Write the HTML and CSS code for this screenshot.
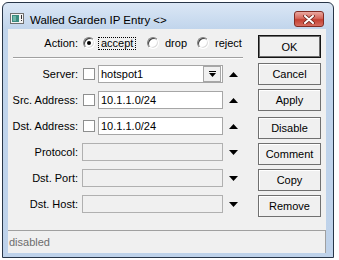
FILE: index.html
```html
<!DOCTYPE html>
<html lang="en">
  <head>
    <meta charset="UTF-8" />
    <title>Walled Garden IP Entry</title>
    <link rel="stylesheet" href="styles.css">
  </head>
  <body>
    <div class="window">
      <div class="titlebar">
        <svg class="app-icon" width="14" height="11" viewBox="0 0 14 11">
          <rect x="0.5" y="0.5" width="13" height="10" fill="#f4f4f4" stroke="#6f6f6f" />
          <rect x="2" y="2" width="7" height="7" fill="#3b8c80" />
          <rect x="3" y="3" width="3" height="5" fill="#6fb5a8" />
          <rect x="11" y="2" width="1" height="4" fill="#333" />
          <rect x="11" y="7" width="1" height="1" fill="#333" />
        </svg>
        <span class="title">Walled Garden IP Entry &lt;&gt;</span>
        <div class="close">
          <svg width="12" height="9" viewBox="0 0 12 9">
            <path d="M2 1 L10 8 M10 1 L2 8" stroke="#6b231c" stroke-width="3.6" stroke-linecap="round" />
            <path d="M2 1 L10 8 M10 1 L2 8" stroke="#fff" stroke-width="2" stroke-linecap="round" />
          </svg>
        </div>
      </div>

      <div class="client">
        <div class="body">
          <div class="form">
            <div class="row action">
              <span class="label">Action:</span>
              <div class="option first">
                <span class="radio checked"></span>
                <span class="opt-text focus">accept</span>
              </div>
              <div class="option second">
                <span class="radio"></span>
                <span class="opt-text">drop</span>
              </div>
              <div class="option">
                <span class="radio"></span>
                <span class="opt-text">reject</span>
              </div>
            </div>

            <div class="sep"></div>

            <div class="rows">
              <div class="row">
                <span class="label">Server:</span>
                <span class="check"></span>
                <div class="field">
                  <span class="value">hotspot1</span>
                  <span class="drop-btn">
                    <svg width="7" height="7" viewBox="0 0 7 7">
                      <rect x="0" y="0" width="7" height="1" fill="#000" />
                      <polygon points="0,2 7,2 3.5,6" fill="#000" />
                    </svg>
                  </span>
                </div>
                <svg class="arrow" width="9" height="5" viewBox="0 0 9 5"><polygon points="0,5 9,5 4.5,0" fill="#000" /></svg>
              </div>
              <div class="row">
                <span class="label">Src. Address:</span>
                <span class="check"></span>
                <div class="field"><span class="value">10.1.1.0/24</span></div>
                <svg class="arrow" width="9" height="5" viewBox="0 0 9 5"><polygon points="0,5 9,5 4.5,0" fill="#000" /></svg>
              </div>
              <div class="row">
                <span class="label">Dst. Address:</span>
                <span class="check"></span>
                <div class="field"><span class="value">10.1.1.0/24</span></div>
                <svg class="arrow" width="9" height="5" viewBox="0 0 9 5"><polygon points="0,5 9,5 4.5,0" fill="#000" /></svg>
              </div>
              <div class="row">
                <span class="label">Protocol:</span>
                <div class="field wide disabled"></div>
                <svg class="arrow" width="9" height="5" viewBox="0 0 9 5"><polygon points="0,0 9,0 4.5,5" fill="#000" /></svg>
              </div>
              <div class="row">
                <span class="label">Dst. Port:</span>
                <div class="field wide disabled"></div>
                <svg class="arrow" width="9" height="5" viewBox="0 0 9 5"><polygon points="0,0 9,0 4.5,5" fill="#000" /></svg>
              </div>
              <div class="row">
                <span class="label">Dst. Host:</span>
                <div class="field wide disabled"></div>
                <svg class="arrow" width="9" height="5" viewBox="0 0 9 5"><polygon points="0,0 9,0 4.5,5" fill="#000" /></svg>
              </div>
            </div>
          </div>

          <div class="buttons">
            <button class="button default">OK</button>
            <button class="button cancel">Cancel</button>
            <button class="button">Apply</button>
            <button class="button group">Disable</button>
            <button class="button">Comment</button>
            <button class="button">Copy</button>
            <button class="button">Remove</button>
          </div>
        </div>

        <div class="status">disabled</div>
      </div>
    </div>
  </body>
</html>
```

FILE: styles.css
```css
body {
  margin: 0;
  background-color: rgb(255, 255, 255);
  font-family: "Liberation Sans", Arial, sans-serif;
  font-size: 11px;
  color: rgb(0, 0, 0);
}

.window {
  margin: 2px 0 0 2px;
  width: 330px;
  height: 254px;
  border: 1px solid rgb(40, 54, 72);
  border-radius: 6px 6px 0 0;
  background: linear-gradient(rgb(219, 231, 245), rgb(193, 213, 236) 26px, rgb(190, 210, 234));
  display: flex;
  flex-direction: column;
}

.titlebar {
  height: 20px;
  padding-top: 6px;
  display: flex;
  align-items: center;
}

.app-icon {
  margin-left: 7px;
  margin-top: -1px;
}

.title {
  margin-left: 6px;
  font-size: 11.5px;
  margin-top: 1px;
}

.close {
  margin-left: auto;
  margin-right: 9px;
  width: 28px;
  height: 14px;
  border: 1px solid rgb(130, 44, 36);
  border-radius: 3px;
  background: linear-gradient(rgb(234, 168, 160), rgb(214, 104, 92) 45%, rgb(196, 64, 50) 55%, rgb(214, 110, 98));
  display: flex;
  justify-content: center;
  align-items: center;
}

.client {
  margin: 0 7px 4px 5px;
  flex: 1;
  background-color: rgb(240, 240, 240);
  display: flex;
  flex-direction: column;
}

.body {
  display: flex;
}

.form {
  width: 240px;
  padding-top: 5px;
  display: flex;
  flex-direction: column;
}

.row {
  height: 18px;
  display: flex;
  align-items: center;
}

.rows {
  margin-top: 6px;
  display: flex;
  flex-direction: column;
  gap: 8px;
}

.label {
  width: 70px;
  text-align: right;
  flex-shrink: 0;
}

.option {
  display: flex;
  align-items: center;
}

.option.first {
  margin-left: 5px;
  width: 64px;
}

.option.second {
  width: 50px;
}

.radio {
  position: relative;
  width: 10px;
  height: 10px;
  border: 1px solid;
  border-color: rgb(128, 128, 128) rgb(255, 255, 255) rgb(255, 255, 255) rgb(128, 128, 128);
  border-radius: 50%;
  background-color: rgb(255, 255, 255);
  box-shadow: inset 1px 1px 0 rgb(64, 64, 64), inset -1px -1px 0 rgb(220, 220, 220);
  transform: rotate(0deg);
}

.radio.checked::after {
  content: "";
  position: absolute;
  left: 3px;
  top: 3px;
  width: 4px;
  height: 4px;
  border-radius: 50%;
  background-color: rgb(0, 0, 0);
}

.opt-text {
  margin-left: 3px;
  padding: 0 2px;
  line-height: 11px;
  border: 1px solid transparent;
}

.opt-text.focus {
  border: 1px dotted rgb(0, 0, 0);
}

.sep {
  margin: 5px 5px 0 5px;
  border-top: 1px solid rgb(160, 160, 160);
  border-bottom: 1px solid rgb(255, 255, 255);
}

.check {
  margin-left: 5px;
  width: 10px;
  height: 10px;
  border: 1px solid rgb(142, 143, 143);
  background-color: rgb(255, 255, 255);
  flex-shrink: 0;
}

.field {
  margin-left: 3px;
  width: 123px;
  height: 16px;
  border: 1px solid rgb(166, 166, 166);
  background-color: rgb(255, 255, 255);
  display: flex;
  align-items: center;
  box-sizing: content-box;
}

.field.wide {
  margin-left: 4px;
  width: 139px;
}

.field.disabled {
  background-color: rgb(240, 240, 240);
  border-color: rgb(176, 176, 176);
}

.value {
  padding-left: 2px;
  flex: 1;
}

.drop-btn {
  width: 16px;
  height: 14px;
  margin-right: 1px;
  border: 1px solid rgb(166, 166, 166);
  background-color: rgb(240, 240, 240);
  display: flex;
  justify-content: center;
  align-items: center;
}

.arrow {
  margin-left: 6px;
  flex-shrink: 0;
}

.buttons {
  margin-left: 10px;
  padding-top: 6px;
  width: 63px;
  display: flex;
  flex-direction: column;
}

.button {
  height: 22px;
  margin-top: 4px;
  padding: 0;
  font-family: "Liberation Sans", Arial, sans-serif;
  font-size: 11px;
  color: rgb(0, 0, 0);
  background-color: rgb(240, 240, 240);
  border: 1px solid rgb(112, 112, 112);
  box-shadow: inset 1px 1px 0 rgb(255, 255, 255);
}

.button.default {
  margin-top: 0;
  height: 23px;
  border-color: rgb(20, 20, 20);
  box-shadow: inset 0 0 0 1px rgb(110, 110, 110);
}

.button.cancel {
  margin-top: 5px;
}

.button.group {
  margin-top: 6px;
}

.status {
  margin-top: auto;
  height: 22px;
  padding-left: 1px;
  border-top: 1px solid rgb(160, 160, 160);
  border-right: 1px solid rgb(160, 160, 160);
  color: rgb(109, 109, 109);
  display: flex;
  align-items: center;
}
```
